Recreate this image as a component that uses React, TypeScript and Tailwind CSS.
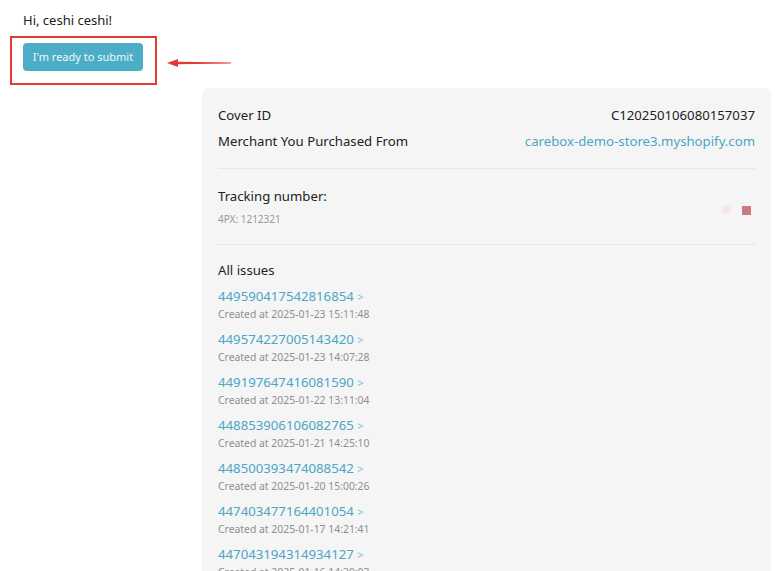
import React from "react";

const issues = [
  ["449590417542816854", "2025-01-23 15:11:48"],
  ["449574227005143420", "2025-01-23 14:07:28"],
  ["449197647416081590", "2025-01-22 13:11:04"],
  ["448853906106082765", "2025-01-21 14:25:10"],
  ["448500393474088542", "2025-01-20 15:00:26"],
  ["447403477164401054", "2025-01-17 14:21:41"],
  ["447043194314934127", "2025-01-16 14:30:03"],
];

const font = { fontFamily: '"Noto Sans", "Open Sans", sans-serif' };

export default function App() {
  return (
    <div className="w-[775px] h-[571px] overflow-hidden bg-white text-[#222]" style={font}>
      <div className="pl-[23px] pt-[10px] text-[13px] leading-[20px]">Hi, ceshi ceshi!</div>
      <div className="flex items-center mt-[6px]">
        <div className="ml-[10px] border-2 border-[#e53935] pl-[11px] pr-[12px] pt-[5px] pb-[12px]">
          <button
            className="h-[28px] w-[120px] rounded-[4px] bg-[#4caec6] text-[#eef8fb] text-[11px]"
            style={font}
          >
            I'm ready to submit
          </button>
        </div>
        <div className="ml-[10px] mt-[4px] flex items-center">
          <svg width="64" height="10" viewBox="0 0 64 10">
            <polygon points="0,5 11,1 11,9" fill="#e53935" />
            <polygon points="10,3.8 64,4.6 64,5.4 10,6.2" fill="#e53935" />
          </svg>
        </div>
      </div>
      <div className="ml-[202px] mr-[4px] mt-[3px] rounded-[8px] bg-[#f5f5f5] px-[16px] pt-[14px] pb-[20px]">
        <div className="flex justify-between text-[13.2px] leading-[26px]">
          <span>Cover ID</span>
          <span>C120250106080157037</span>
        </div>
        <div className="flex justify-between text-[13.2px] leading-[26px]">
          <span>Merchant You Purchased From</span>
          <span className="text-[#4ba7c4]">carebox-demo-store3.myshopify.com</span>
        </div>
        <div className="mt-[14px] border-t border-[#e6e6e6]" />
        <div className="flex items-center justify-between pt-[15px] pb-[16px]">
          <div>
            <div className="text-[13.2px] leading-[24px]">Tracking number:</div>
            <div className="mt-[2px] text-[10px] leading-[18px] text-[#999]">4PX: 1212321</div>
          </div>
          <div className="flex items-center gap-[12px] mt-[8px] mr-[4px]">
            <div className="w-[8px] h-[8px] bg-[#fbe4e8]" />
            <div className="w-[9px] h-[9px] bg-[#cc7a7e]" />
          </div>
        </div>
        <div className="border-t border-[#e6e6e6]" />
        <div className="pt-[14px] text-[13.2px] leading-[22px]">All issues</div>
        <div className="mt-[5px] flex flex-col">
          {issues.map(([id, date]) => (
            <div key={id} className="h-[43px]">
              <div className="text-[13.2px] leading-[20px] text-[#4ba7c4]">
                {id} <span className="text-[11px] text-[#7fc0d4]">&gt;</span>
              </div>
              <div className="text-[10.4px] leading-[14px] text-[#8f8f8f]">Created at {date}</div>
            </div>
          ))}
        </div>
      </div>
    </div>
  );
}
